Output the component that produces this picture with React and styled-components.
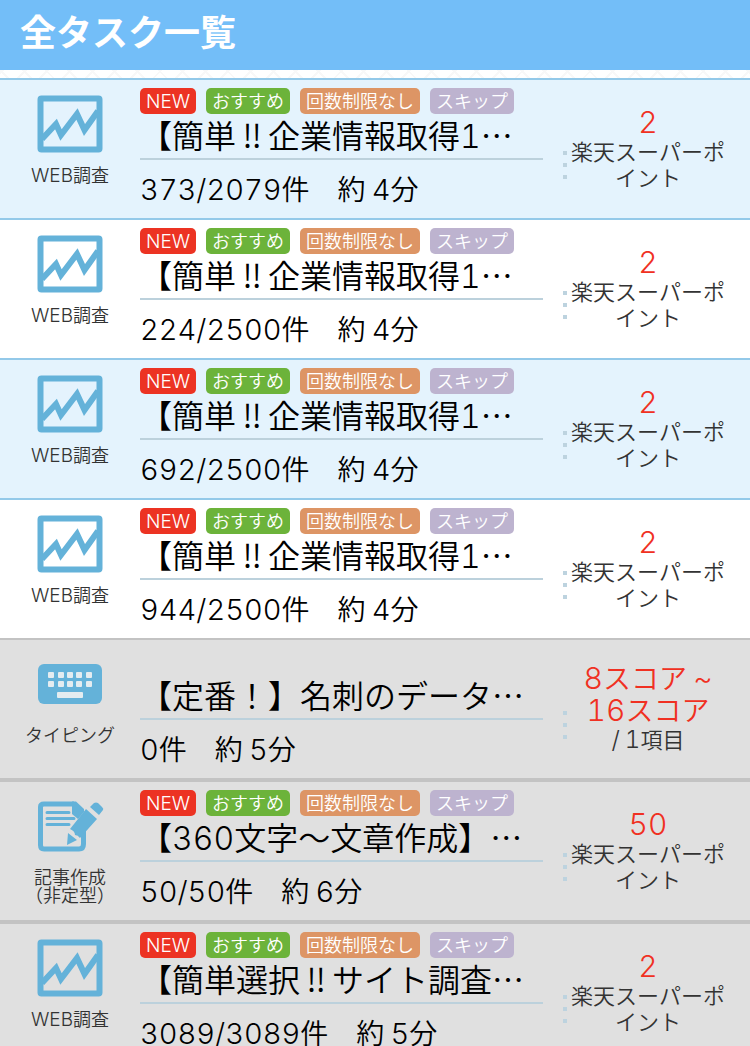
import React, { Fragment } from "react";
import styled, { createGlobalStyle } from "styled-components";

const CJK = `"Noto Sans CJK JP", sans-serif`;
const LATIN = `Inter, "Noto Sans CJK JP", sans-serif`;

const tasks = [
    { id: 1, kind: "web", title: "【簡単‼企業情報取得1…", count: "373/2079", minutes: 4, point: "2" },
    { id: 2, kind: "web", title: "【簡単‼企業情報取得1…", count: "224/2500", minutes: 4, point: "2" },
    { id: 3, kind: "web", title: "【簡単‼企業情報取得1…", count: "692/2500", minutes: 4, point: "2" },
    { id: 4, kind: "web", title: "【簡単‼企業情報取得1…", count: "944/2500", minutes: 4, point: "2" },
    {
        id: 5,
        kind: "typing",
        title: "【定番！】名刺のデータ…",
        count: "0",
        minutes: 5,
        point: "8スコア ~ 16スコア",
        unit: "/ 1項目",
        noTags: true,
        closed: true,
    },
    { id: 6, kind: "article", title: "【360文字〜文章作成】…", count: "50/50", minutes: 6, point: "50", closed: true },
    { id: 7, kind: "web", title: "【簡単選択‼サイト調査…", count: "3089/3089", minutes: 5, point: "2", closed: true },
];

const tags = [
    { label: "NEW", color: "#ec3323" },
    { label: "おすすめ", color: "#6cb33a" },
    { label: "回数制限なし", color: "#dd9565" },
    { label: "スキップ", color: "#bdb3cf" },
];

const kindLabels = {
    web: ["WEB調査"],
    typing: ["タイピング"],
    article: ["記事作成", "（非定型）"],
};

// 英数字だけ欧文フォントで表示し、「‼」は全角幅にそろえる
const mixed = (str, size) =>
    str.split(/([A-Z\d/~]+|‼)/).map((part, i) => {
        if (part === "‼") return <FullWidth key={i}>{part}</FullWidth>;
        if (i % 2) {
            return (
                <Latin key={i} $size={size}>
                    {part}
                </Latin>
            );
        }
        return part;
    });

function KindIcon({ kind }) {
    if (kind === "typing") {
        return (
            <Icon viewBox="0 0 64 64" aria-hidden="true">
                <rect x="0" y="12" width="64" height="40" rx="6" fill="#64b2d9" />
                <g fill="#e4ecf0">
                    {[10, 20, 29, 38, 48].map((x) => (
                        <Fragment key={x}>
                            <rect x={x} y="20" width="6" height="6" rx="1" />
                            <rect x={x} y="29" width="6" height="6" rx="1" />
                        </Fragment>
                    ))}
                    <rect x="19" y="40" width="26" height="6" rx="1" />
                </g>
            </Icon>
        );
    }
    if (kind === "article") {
        return (
            <Icon viewBox="0 0 64 64" aria-hidden="true">
                <path
                    d="M36 10H6Q2.500 10 2.500 13V51Q2.500 55 6 55H41Q45.500 55 45.500 50V36"
                    fill="none"
                    stroke="#64b2d9"
                    strokeWidth="5"
                />
                <path d="M34 7.500H38L46 15V18L40 25L34 20Z" fill="#64b2d9" />
                <path
                    d="M9 18.500H31M9 24.500H36M9 30.500H31"
                    fill="none"
                    stroke="#64b2d9"
                    strokeWidth="3"
                    strokeLinecap="round"
                />
                <path
                    d="M48 15L59 25L42 44Q40 41 37 41Q37 37 32 35Z M52 13L56 9Q58 8 60 9L64 13Q66 15 65 16L61 21Z M30 39L39 46L29 51Z"
                    fill="#64b2d9"
                />
            </Icon>
        );
    }
    return (
        <Icon viewBox="0 0 64 64" aria-hidden="true">
            <rect x="2.500" y="6.500" width="59" height="51" rx="1" fill="none" stroke="#64b2d9" strokeWidth="6" />
            <path d="M4 47L18 32L23 43L39 22L46.500 38L60 19" fill="none" stroke="#64b2d9" strokeWidth="6" />
        </Icon>
    );
}

function Task({ task }) {
    return (
        <Item $closed={task.closed}>
            <TaskLink href={`#task-${task.id}`}>
                <Kind>
                    <KindIcon kind={task.kind} />
                    <KindLabel>
                        {kindLabels[task.kind].map((line) => (
                            <span key={line}>{mixed(line, 19)}</span>
                        ))}
                    </KindLabel>
                </Kind>
                <Main>
                    <Tags>
                        {!task.noTags &&
                            tags.map((tag) => (
                                <Tag key={tag.label} $color={tag.color}>
                                    {mixed(tag.label, 19)}
                                </Tag>
                            ))}
                    </Tags>
                    <Title>{mixed(task.title, 32)}</Title>
                    <Detail>{mixed(`${task.count}件　約 ${task.minutes}分`, 29)}</Detail>
                </Main>
                <Dots>
                    <i />
                    <i />
                    <i />
                </Dots>
                <Reward>
                    <Point>{mixed(task.point, 30)}</Point>
                    <Unit>{mixed(task.unit || "楽天スーパーポイント", 24)}</Unit>
                </Reward>
            </TaskLink>
        </Item>
    );
}

function App() {
    return (
        <>
            <GlobalStyle />
            <Header>
                <h1>全タスク一覧</h1>
            </Header>
            <List lang="ja">
                {tasks.map((task) => (
                    <Task key={task.id} task={task} />
                ))}
            </List>
        </>
    );
}

const GlobalStyle = createGlobalStyle`
    * {
        box-sizing: border-box;
    }

    body {
        margin: 0;
        font-family: ${CJK};
        font-weight: 350;
        color: #000;
        background-color: #fff;
        background-image:
            repeating-linear-gradient(45deg, transparent 0 14px, #f8f8f8 14px 16px),
            repeating-linear-gradient(-45deg, transparent 0 14px, #f8f8f8 14px 16px);
    }
`;

const Header = styled.header`
    padding: 0 20px;
    margin-bottom: 8px;
    background: #73bef8;

    h1 {
        margin: 0;
        padding-bottom: 10px;
        font-size: 36px;
        line-height: 60px;
        font-weight: 700;
        color: #fff;
    }
`;

const List = styled.ul`
    margin: 0;
    padding: 0;
    list-style: none;
`;

const Item = styled.li`
    border-top: 2px solid ${(props) => (props.$closed ? "#c3c3c3" : "#93c9e9")};
    border-bottom: ${(props) => (props.$closed ? "2px solid #c3c3c3" : "none")};
    background: ${(props) => (props.$closed ? "#e0e0e0" : "#fff")};

    &:nth-child(odd) {
        background: ${(props) => (props.$closed ? "#e0e0e0" : "#e4f3fd")};
    }
`;

const TaskLink = styled.a`
    display: grid;
    grid-template-columns: 140px minmax(0, 1fr) 24px 162px;
    padding-right: 21px;
    color: inherit;
    text-decoration: none;
`;

const Kind = styled.div`
    display: flex;
    flex-direction: column;
    align-items: center;
    gap: 9px;
    padding-top: 12px;
`;

const Icon = styled.svg`
    display: block;
    width: 64px;
    height: 64px;
    overflow: visible;
`;

const KindLabel = styled.div`
    display: flex;
    flex-direction: column;
    align-items: center;
    font-size: 18px;
    line-height: 18px;
    color: #333;
`;

const Main = styled.div`
    padding-top: 8px;
`;

const Tags = styled.div`
    display: flex;
    gap: 10px;
    height: 26px;
`;

const Tag = styled.span`
    padding: 0 6px;
    border-radius: 5px;
    font-size: 18px;
    line-height: 24px;
    white-space: nowrap;
    color: #fff;
    background: ${(props) => props.$color};
`;

const Title = styled.h2`
    margin: 0;
    padding-bottom: 4px;
    border-bottom: 2px solid #bcd1dc;
    font-size: 32px;
    line-height: 40px;
    font-weight: inherit;
    white-space: nowrap;
`;

const Latin = styled.span`
    font-family: ${LATIN};
    font-size: ${(props) => props.$size}px;
    font-variant-numeric: tabular-nums;
    line-height: 1;
`;

const FullWidth = styled.span`
    display: inline-block;
    width: 1em;
    line-height: 1;
    text-align: center;
`;

const Detail = styled.p`
    margin: 0;
    padding-bottom: 2px;
    font-size: 28px;
    line-height: 56px;
    white-space: nowrap;
`;

const Dots = styled.div`
    display: flex;
    flex-direction: column;
    align-items: flex-end;
    gap: 8px;
    padding-top: 71px;

    i {
        width: 4px;
        height: 4px;
        background: #bdd3df;
    }
`;

const Reward = styled.div`
    display: flex;
    flex-direction: column;
    justify-content: center;
    padding-bottom: 5px;
    text-align: center;
`;

const Point = styled.strong`
    font-size: 28px;
    line-height: 32px;
    font-weight: inherit;
    color: #f03022;
`;

const Unit = styled.span`
    font-size: 22px;
    line-height: 26px;
    color: #333;
`;

export default App;
